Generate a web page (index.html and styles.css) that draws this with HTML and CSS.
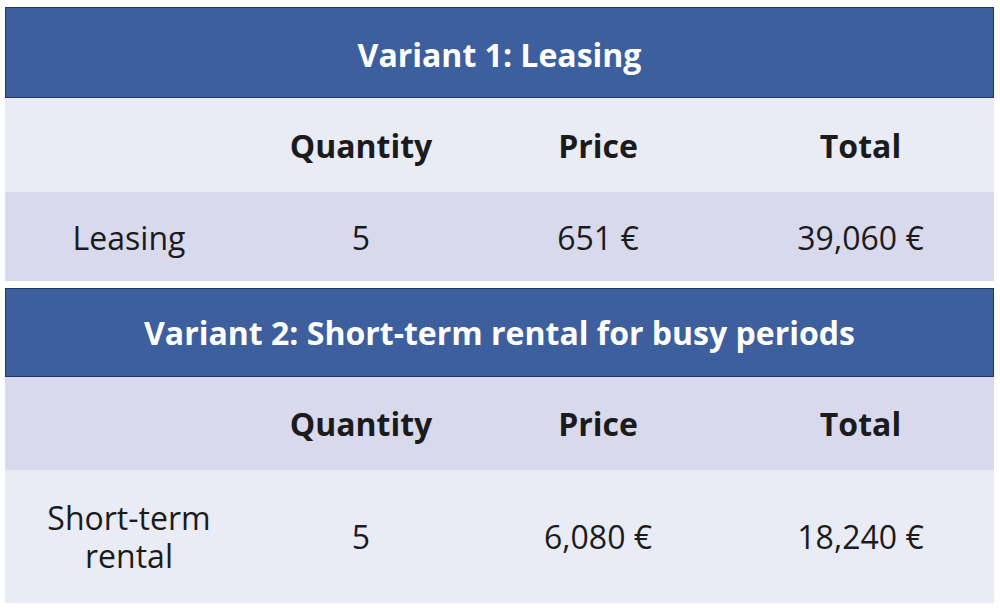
FILE: index.html
```html
<!DOCTYPE html>
<html>
<head>
<meta charset="utf-8">
<link rel="stylesheet" href="styles.css">
</head>
<body>
<div class="page">
  <section class="block">
    <div class="title">Variant 1: Leasing</div>
    <div class="row head light">
      <div class="cell"></div>
      <div class="cell">Quantity</div>
      <div class="cell">Price</div>
      <div class="cell">Total</div>
    </div>
    <div class="row data dark r1">
      <div class="cell">Leasing</div>
      <div class="cell">5</div>
      <div class="cell">651 €</div>
      <div class="cell">39,060 €</div>
    </div>
  </section>
  <section class="block">
    <div class="title t2">Variant 2: Short-term rental for busy periods</div>
    <div class="row head dark">
      <div class="cell"></div>
      <div class="cell">Quantity</div>
      <div class="cell">Price</div>
      <div class="cell">Total</div>
    </div>
    <div class="row data light r2">
      <div class="cell">Short-term<br>rental</div>
      <div class="cell">5</div>
      <div class="cell">6,080 €</div>
      <div class="cell">18,240 €</div>
    </div>
  </section>
</div>
</body>
</html>
```
FILE: styles.css
```css
html, body {
  margin: 0;
  padding: 0;
  background: #ffffff;
}
body {
  font-family: "Open Sans", "Noto Sans", sans-serif;
  color: #1b1b1b;
}
.page {
  padding: 7px 6px 0 5px;
  display: flex;
  flex-direction: column;
  gap: 7px;
}
.block {
  display: flex;
  flex-direction: column;
}
.title {
  background: #3d5f9e;
  color: #ffffff;
  font-weight: 700;
  font-size: 32px;
  border: 1px solid #1f3565;
  display: flex;
  align-items: center;
  justify-content: center;
  box-sizing: border-box;
  height: 91px;
  padding-top: 4px;
}
.title.t2 {
  height: 89px;
  padding-top: 0;
}
.row {
  display: grid;
  grid-template-columns: 248px 216px 258px 1fr;
}
.cell {
  display: flex;
  align-items: center;
  justify-content: center;
  text-align: center;
  font-size: 32px;
  line-height: 38px;
}
.head .cell {
  font-weight: 700;
  height: 94px;
  padding-top: 2px;
  box-sizing: border-box;
}
.head.dark .cell {
  height: 93px;
  padding-top: 0;
}
.data.r1 .cell {
  height: 89px;
  padding-top: 2px;
  box-sizing: border-box;
}
.data.r2 .cell {
  height: 133px;
  box-sizing: border-box;
}
.light {
  background: #e9ebf5;
}
.dark {
  background: #d8d9ed;
}
```
